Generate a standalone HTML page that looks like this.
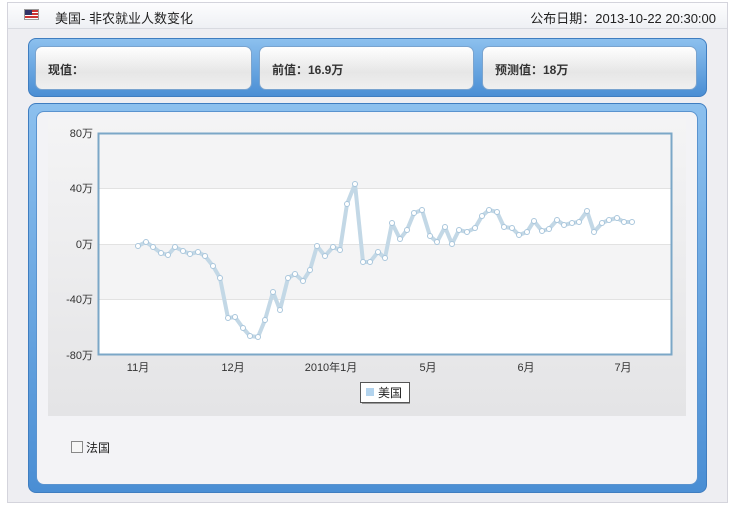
<!DOCTYPE html>
<html><head><meta charset="utf-8"><style>
*{margin:0;padding:0;box-sizing:border-box}
body{width:735px;height:511px;background:#fff;font-family:"Liberation Sans","Noto Sans CJK SC",sans-serif;font-size:12px;color:#222;position:relative;overflow:hidden}
.outer{position:absolute;left:7px;top:2px;width:721px;height:501px;border:1px solid #d4d4dc;background:#eeeef2}
.hdr{position:absolute;left:0;top:0;width:719px;height:26px;background:linear-gradient(#fdfdfe,#eef0f4);border-bottom:1px solid #d8dae0}
.flag{position:absolute;left:16px;top:6px;width:15px;height:11px;background:repeating-linear-gradient(#c33 0 2px,#fff 2px 3px);border:1px solid #999}
.flag:before{content:"";position:absolute;left:0;top:0;width:7px;height:5px;background:#336}
.blue{position:absolute;border-radius:8px;background:linear-gradient(#8cc0ee,#4a8ed4);border:1px solid #3f7dc0}
.card{position:absolute;top:46px;height:44px;border-radius:7px;background:linear-gradient(#fff,#e6e6e6 60%,#f0f0f0);border:1px solid #7aa4cf;padding:14px 0 0 12px;font-size:12px;font-weight:bold;color:#333}
.inner{position:absolute;left:36px;top:111px;width:662px;height:374px;border-radius:8px;background:#f3f3f6;border:1px solid #5a93cf}
</style></head><body>
<div class="outer">
 <div class="hdr"><div class="flag"></div>
  <div style="position:absolute;left:47px;top:5px;font-size:13px">美国- 非农就业人数变化</div>
  <div style="position:absolute;right:11px;top:5px;font-size:13px">公布日期：2013-10-22 20:30:00</div>
 </div>
</div>
<div class="blue" style="left:28px;top:38px;width:679px;height:59px"></div>
<div class="card" style="left:35px;width:217px">现值：</div>
<div class="card" style="left:259px;width:215px">前值：16.9万</div>
<div class="card" style="left:482px;width:215px">预测值：18万</div>
<div class="blue" style="left:28px;top:103px;width:679px;height:390px"></div>
<div class="inner"></div>
<svg style="position:absolute;left:0;top:0" width="735" height="511">
<defs><linearGradient id="g" x1="0" y1="0" x2="0" y2="1"><stop offset="0" stop-color="#f4f4f5"/><stop offset="1" stop-color="#e4e4e6"/></linearGradient></defs>
<rect x="48" y="119" width="638" height="297" fill="url(#g)"/>
<rect x="98" y="133" width="574" height="222" fill="#fff"/>
<rect x="98" y="133" width="574" height="55" fill="#f4f4f5"/>
<rect x="98" y="244" width="574" height="55" fill="#f4f4f5"/>
<g stroke="#e2e2e2"><line x1="98" y1="188.5" x2="672" y2="188.5"/><line x1="98" y1="244.5" x2="672" y2="244.5"/><line x1="98" y1="299.5" x2="672" y2="299.5"/></g>
<rect x="98.5" y="133.5" width="573" height="221" fill="none" stroke="#7ba7c7" stroke-width="2"/>
<g font-size="11" fill="#333" text-anchor="end" font-family="Liberation Sans,Noto Sans CJK SC,sans-serif">
<text x="93" y="137">80万</text><text x="93" y="192">40万</text><text x="93" y="248">0万</text><text x="93" y="303">-40万</text><text x="93" y="359">-80万</text></g>
<g font-size="11" fill="#333" text-anchor="middle" font-family="Liberation Sans,Noto Sans CJK SC,sans-serif">
<text x="138" y="371">11月</text><text x="233" y="371">12月</text><text x="331" y="371">2010年1月</text><text x="428" y="371">5月</text><text x="526" y="371">6月</text><text x="623" y="371">7月</text></g>
<polyline fill="none" stroke="#c3d8e6" stroke-width="4" stroke-linejoin="round" points="138,246 146,242 153,247 161,253 168,255 175,247 183,251 190,254 198,252 205,256 213,266 220,278 228,318 235,317 243,328 250,336 258,337 265,320 273,292 280,310 288,278 295,274 303,281 310,270 317,246 325,256 333,247 340,250 347,204 355,184 363,262 370,262 378,252 385,258 392,223 400,239 407,230 414,213 422,210 430,236 437,242 445,227 452,244 459,230 467,232 475,228 482,216 489,210 497,212 504,227 512,228 519,235 527,232 534,221 542,231 549,229 557,220 564,225 572,223 579,222 587,211 594,232 602,223 609,220 617,218 624,222 632,222"/>
<rect x="360.5" y="382.5" width="49" height="20" fill="#fff" stroke="#555"/>
<line x1="362" y1="403.5" x2="410" y2="403.5" stroke="#999"/>
<rect x="366" y="388" width="8" height="8" fill="#b3d4ee"/>
<text x="378" y="397" font-size="12" fill="#222" font-family="Liberation Sans,Noto Sans CJK SC,sans-serif">美国</text>
<rect x="71.5" y="441.5" width="11" height="11" fill="#f6f6f6" stroke="#888"/>
<text x="86" y="452" font-size="12" fill="#222" font-family="Liberation Sans,Noto Sans CJK SC,sans-serif">法国</text>
<g fill="#fff" stroke="#a9c6dc">
<circle cx="138" cy="246" r="2.5"/><circle cx="146" cy="242" r="2.5"/><circle cx="153" cy="247" r="2.5"/><circle cx="161" cy="253" r="2.5"/><circle cx="168" cy="255" r="2.5"/><circle cx="175" cy="247" r="2.5"/><circle cx="183" cy="251" r="2.5"/><circle cx="190" cy="254" r="2.5"/><circle cx="198" cy="252" r="2.5"/><circle cx="205" cy="256" r="2.5"/><circle cx="213" cy="266" r="2.5"/><circle cx="220" cy="278" r="2.5"/><circle cx="228" cy="318" r="2.5"/><circle cx="235" cy="317" r="2.5"/><circle cx="243" cy="328" r="2.5"/><circle cx="250" cy="336" r="2.5"/><circle cx="258" cy="337" r="2.5"/><circle cx="265" cy="320" r="2.5"/><circle cx="273" cy="292" r="2.5"/><circle cx="280" cy="310" r="2.5"/><circle cx="288" cy="278" r="2.5"/><circle cx="295" cy="274" r="2.5"/><circle cx="303" cy="281" r="2.5"/><circle cx="310" cy="270" r="2.5"/><circle cx="317" cy="246" r="2.5"/><circle cx="325" cy="256" r="2.5"/><circle cx="333" cy="247" r="2.5"/><circle cx="340" cy="250" r="2.5"/><circle cx="347" cy="204" r="2.5"/><circle cx="355" cy="184" r="2.5"/><circle cx="363" cy="262" r="2.5"/><circle cx="370" cy="262" r="2.5"/><circle cx="378" cy="252" r="2.5"/><circle cx="385" cy="258" r="2.5"/><circle cx="392" cy="223" r="2.5"/><circle cx="400" cy="239" r="2.5"/><circle cx="407" cy="230" r="2.5"/><circle cx="414" cy="213" r="2.5"/><circle cx="422" cy="210" r="2.5"/><circle cx="430" cy="236" r="2.5"/><circle cx="437" cy="242" r="2.5"/><circle cx="445" cy="227" r="2.5"/><circle cx="452" cy="244" r="2.5"/><circle cx="459" cy="230" r="2.5"/><circle cx="467" cy="232" r="2.5"/><circle cx="475" cy="228" r="2.5"/><circle cx="482" cy="216" r="2.5"/><circle cx="489" cy="210" r="2.5"/><circle cx="497" cy="212" r="2.5"/><circle cx="504" cy="227" r="2.5"/><circle cx="512" cy="228" r="2.5"/><circle cx="519" cy="235" r="2.5"/><circle cx="527" cy="232" r="2.5"/><circle cx="534" cy="221" r="2.5"/><circle cx="542" cy="231" r="2.5"/><circle cx="549" cy="229" r="2.5"/><circle cx="557" cy="220" r="2.5"/><circle cx="564" cy="225" r="2.5"/><circle cx="572" cy="223" r="2.5"/><circle cx="579" cy="222" r="2.5"/><circle cx="587" cy="211" r="2.5"/><circle cx="594" cy="232" r="2.5"/><circle cx="602" cy="223" r="2.5"/><circle cx="609" cy="220" r="2.5"/><circle cx="617" cy="218" r="2.5"/><circle cx="624" cy="222" r="2.5"/><circle cx="632" cy="222" r="2.5"/>
</g>
</svg>
</body></html>
